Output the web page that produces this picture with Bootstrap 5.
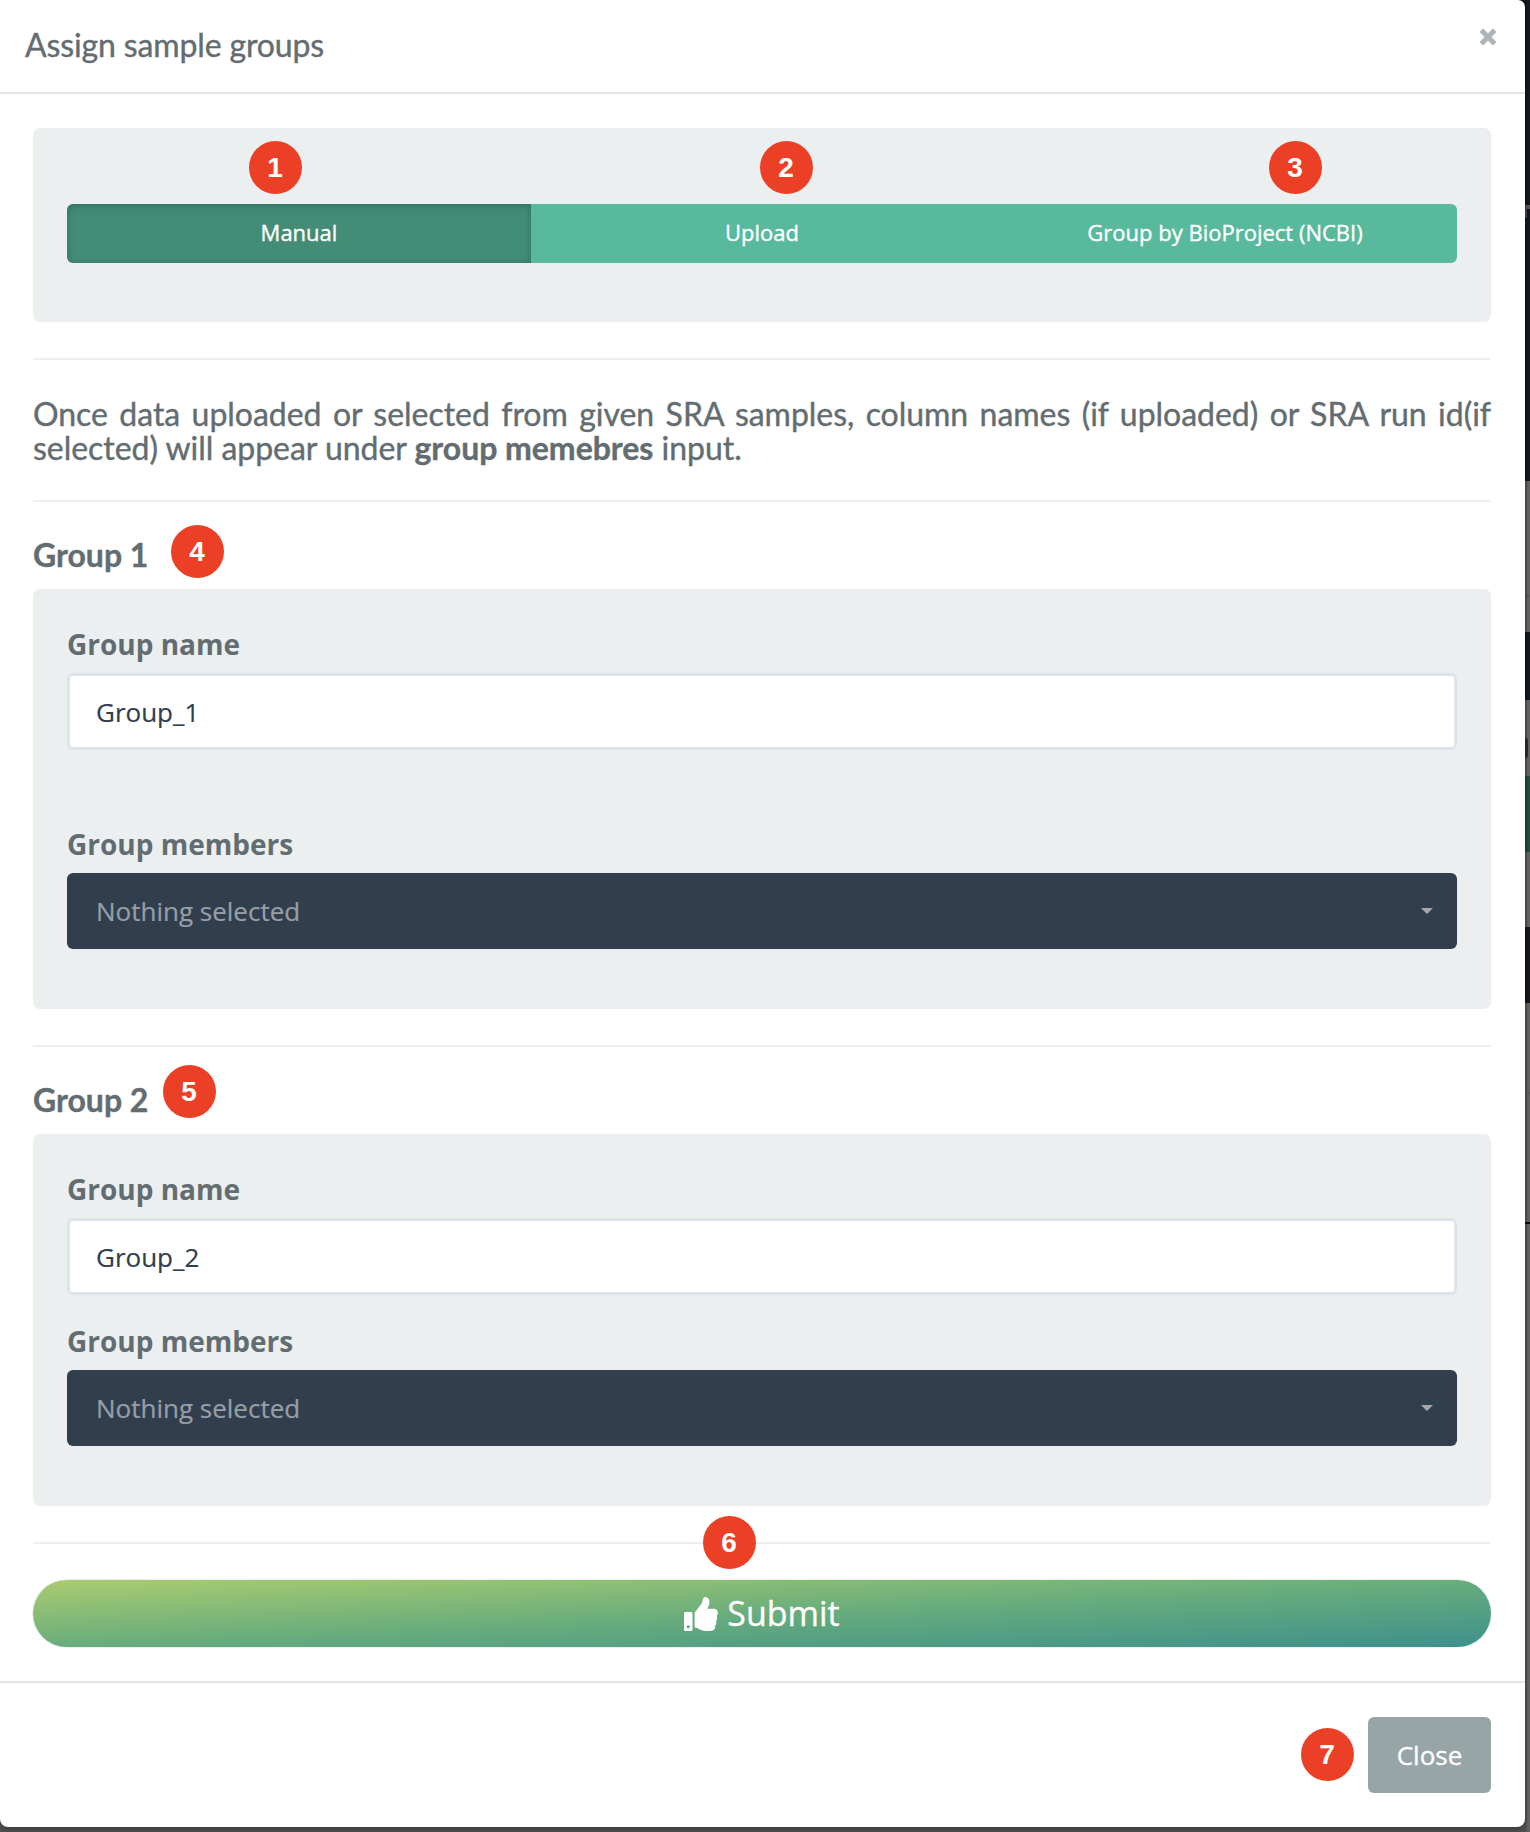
<!DOCTYPE html>
<html lang="en">
<head>
<meta charset="utf-8">
<meta name="viewport" content="width=device-width, initial-scale=1">
<title>Assign sample groups</title>
<link href="https://cdn.jsdelivr.net/npm/bootstrap@5.3.0/dist/css/bootstrap.min.css" rel="stylesheet">
<style>
  body { font-family: "Open Sans", "Noto Sans", sans-serif; font-size: 26px; color: #636d71; height: 1832px; overflow: hidden; background: #666; }
  /* dimmed page behind the dialog */
  .backdrop-page {
    background:
      linear-gradient(90deg, rgba(0,0,0,.15) 0 1527px, transparent 1527px),
      linear-gradient(#111a22 0 481px, #646464 481px 595px, #5c5c5c 595px 597px, #646464 597px 632px, #111a22 632px 700px, #646464 700px 776px, #21513f 776px 852px, #666462 852px 927px, #14191f 927px 1003px, #646361 1003px 1092px, #5b5b5a 1092px 1094px, #646361 1094px 1222px, #0c0c0c 1222px 1224px, #646361 1224px 1826px, #606060 1826px);
    height: 1832px;
  }
  .peek { position: absolute; left: 1525px; overflow: hidden; width: 5px; }
  .peek-mark { top: 205px; height: 13px; border-top: 4px solid #55595c; border-left: 2px solid #40464a; }
  .peek-dot { top: 738px; height: 20px; width: 3px; background: #2b2b2b; border-radius: 0 3px 3px 0; }
  .dialog { position: relative; width: 1525px; height: 1827px; border: 0; border-radius: 0 7px 8px 8px; background: #fff; box-shadow: 0 2px 6px rgba(0,0,0,.35); color: inherit; }
  .dialog .modal-header { height: 94px; padding: 27px 34px 0 25px; border-bottom: 2px solid #e5e5e5; align-items: flex-start; }
  .dialog .modal-title { font: 400 32px/36px Lato, sans-serif; letter-spacing: -.14px; -webkit-text-stroke: .4px #636d71; }
  .dismiss { background: none; border: 0; padding: 1px 0 0; margin: 0 -6px 0 0; line-height: 0; }
  .dialog .modal-body { padding: 34px 34px 34px 33px; flex: none; }
  .dialog .modal-footer { height: 146px; padding: 34px; border-top: 2px solid #e5e5e5; gap: 14px; }
  .dialog .modal-footer > * { margin: 0; }
  .dialog .modal-footer > .pin { margin-bottom: 2px; }
  .rule { border: 0; border-top: 2px solid #ebeff0; opacity: 1; margin: 36px 0; }
  .well-box { background: #ebeff0; border-radius: 7px; padding: 34px 34px 60px; }
  .well-tabs { padding: 76px 34px 59px; position: relative; }
  .mode-tabs .btn { flex: 1 1 0; height: 59px; padding: 0 0 3px; line-height: 56px; font-size: 22px; color: #fff; background: #58b99d; border: 0; border-radius: 6px; -webkit-text-stroke: .35px #fff; }
  .mode-tabs .btn.active { background: #438d77; box-shadow: inset 0 3px 10px rgba(0,0,0,.14), inset 0 0 5px rgba(0,0,0,.1); color: #fff; }
  .intro { font: 400 32px/34px Lato, sans-serif; text-align: justify; margin: 0; padding-top: 1px; height: 68px; letter-spacing: -.03px; -webkit-text-stroke: .4px #636d71; }
  .group-title { font: 700 32px/34px Lato, sans-serif; margin: 0 0 17px; position: relative; -webkit-text-stroke: .4px #636d71; }
  .field-label { display: block; font-size: 28px; font-weight: 700; line-height: 42px; margin: 0 0 8px; }
  .well-box .form-control { height: 77px; padding: 0 26px; font-size: 26px; color: #313e4e; background: #fff; border: 3px solid #dde4eb; border-radius: 6px; -webkit-text-stroke: .2px #313e4e; }
  .select-btn { height: 76px; padding: 0 24px 0 29px; font-size: 26px; line-height: 76px; color: #979ea6; background: #313e4e; border: 0; border-radius: 6px; -webkit-text-stroke: .2px #979ea6; }
  .select-btn:hover { background: #313e4e; color: #979ea6; }
  .select-btn::after { border-top: 6px solid #a5a7a8; border-left: 6px solid transparent; border-right: 6px solid transparent; }
  .gap-lg { margin-top: 73px; }
  .gap-sm { margin-top: 25px; }
  .submit-btn { height: 67px; border: 0; border-radius: 34px; gap: 9px; padding: 0; font-size: 34px; line-height: 65px; color: #fff; background: linear-gradient(to bottom right, #aacc70, #69ad7c 50%, #3d908c); box-shadow: 0 0 0 1px #ecf1f0; -webkit-text-stroke: .3px #fff; }
  .close-btn { width: 123px; height: 76px; padding: 0; font-size: 26px; color: #fff; background: #98a5a6; border: 0; border-radius: 6px; -webkit-text-stroke: .3px #fff; }
  /* numbered callouts laid over the dialog */
  .pin { display: flex; align-items: center; justify-content: center; width: 53px; height: 53px; padding-right: 1px; flex: none; border-radius: 50%; background: #eb4026; color: #fff; font: 700 28px/53px "Liberation Sans", sans-serif; -webkit-text-stroke: 0; }
  .pin-over { position: absolute; }
  .pin-1 { left: 216px; top: 13px; }
  .pin-2 { left: 727px; top: 13px; }
  .pin-3 { left: 1236px; top: 13px; }
  .pin-4 { left: 138px; top: -13px; }
  .pin-5 { left: 130px; top: -18px; }
  .pin-6 { left: 670px; top: -26px; }
</style>
</head>
<body>
<div class="backdrop-page position-relative">
  <span class="peek peek-mark"></span>
  <span class="peek peek-dot"></span>
  <div class="modal-content dialog">
    <div class="modal-header">
      <h5 class="modal-title">Assign sample groups</h5>
      <button type="button" class="dismiss" aria-label="Close">
        <svg width="18" height="18" viewBox="0 0 18 18"><path d="M2.3 2.3L15.7 15.7M15.7 2.3L2.3 15.7" stroke="#adb3b8" stroke-width="5"/></svg>
      </button>
    </div>
    <div class="modal-body">
      <div class="well-box well-tabs">
        <div class="btn-group d-flex mode-tabs" role="group">
          <button type="button" class="btn active">Manual</button>
          <button type="button" class="btn">Upload</button>
          <button type="button" class="btn">Group by BioProject (NCBI)</button>
        </div>
        <span class="pin pin-over pin-1">1</span>
        <span class="pin pin-over pin-2">2</span>
        <span class="pin pin-over pin-3">3</span>
      </div>
      <hr class="rule">
      <p class="intro">Once data uploaded or selected from given SRA samples, column names (if uploaded) or SRA run id(if selected) will appear under <b>group memebres</b> input.</p>
      <hr class="rule">
      <h5 class="group-title">Group 1 <span class="pin pin-over pin-4">4</span></h5>
      <div class="well-box">
        <label class="field-label" for="g1">Group name</label>
        <input id="g1" type="text" class="form-control" value="Group_1">
        <label class="field-label gap-lg">Group members</label>
        <button type="button" class="btn dropdown-toggle select-btn w-100 d-flex align-items-center justify-content-between">Nothing selected</button>
      </div>
      <hr class="rule">
      <h5 class="group-title">Group 2 <span class="pin pin-over pin-5">5</span></h5>
      <div class="well-box">
        <label class="field-label" for="g2">Group name</label>
        <input id="g2" type="text" class="form-control" value="Group_2">
        <label class="field-label gap-sm">Group members</label>
        <button type="button" class="btn dropdown-toggle select-btn w-100 d-flex align-items-center justify-content-between">Nothing selected</button>
      </div>
      <div class="position-relative">
        <hr class="rule">
        <span class="pin pin-over pin-6">6</span>
      </div>
      <button type="button" class="btn submit-btn w-100 d-flex align-items-center justify-content-center">
        <svg width="34" height="34" viewBox="0 0 512 512" fill="#fff"><path d="M104 224H24c-13.255 0-24 10.745-24 24v240c0 13.255 10.745 24 24 24h80c13.255 0 24-10.745 24-24V248c0-13.255-10.745-24-24-24zM64 472c-13.255 0-24-10.745-24-24s10.745-24 24-24 24 10.745 24 24-10.745 24-24 24zM384 81.452c0 42.416-25.97 66.208-33.277 94.548h101.723c33.397 0 59.397 27.746 59.553 58.098.084 17.938-7.546 37.249-19.439 49.197l-.11.11c9.836 23.337 8.237 56.037-9.308 79.469 8.681 25.895-.069 57.704-16.382 74.757 4.298 17.598 2.244 32.575-6.148 44.632C440.202 511.587 389.616 512 346.839 512l-2.845-.001c-48.287-.017-87.806-17.598-119.56-31.725-15.957-7.099-36.821-15.887-52.651-16.178-6.54-.12-11.783-5.457-11.783-11.998v-213.77c0-3.2 1.282-6.271 3.558-8.521 39.614-39.144 56.648-80.587 89.117-113.111 14.804-14.832 20.188-37.236 25.393-58.902C282.515 39.293 291.817 0 312 0c24 0 72 8 72 81.452z"/></svg>
        <span>Submit</span>
      </button>
    </div>
    <div class="modal-footer flex-nowrap justify-content-end align-items-center">
      <span class="pin">7</span>
      <button type="button" class="btn close-btn">Close</button>
    </div>
  </div>
</div>
<script src="https://cdn.jsdelivr.net/npm/bootstrap@5.3.0/dist/js/bootstrap.bundle.min.js"></script>
</body>
</html>
